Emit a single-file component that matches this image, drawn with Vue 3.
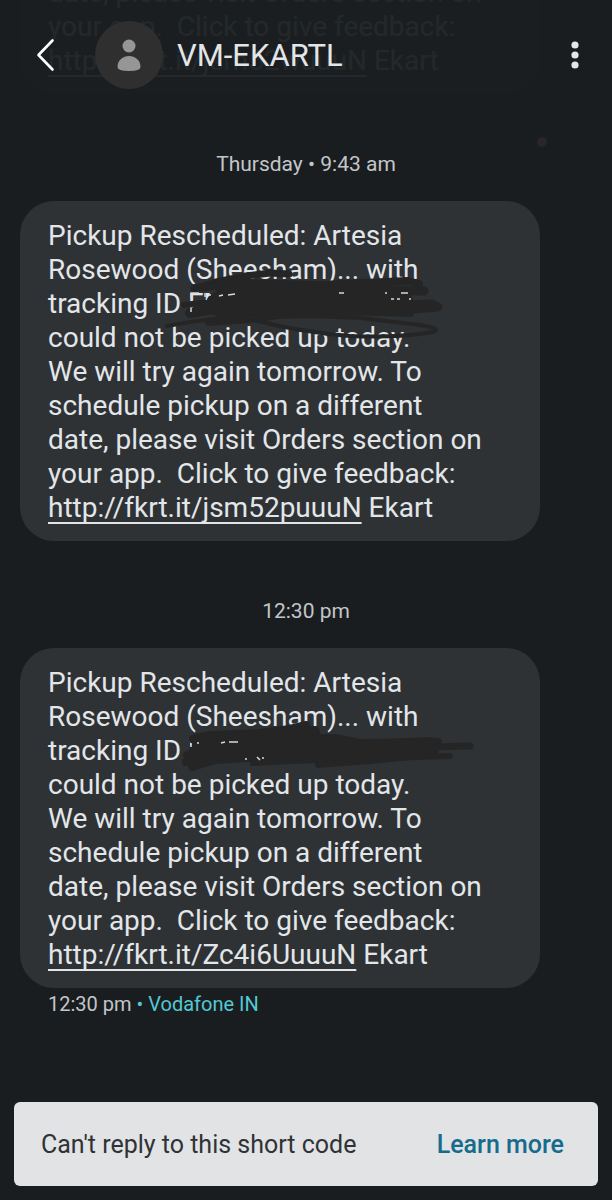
<script setup>
const intro = ['Pickup Rescheduled: Artesia', 'Rosewood (Sheesham)... with']
const rest = [
  'could not be picked up today.',
  'We will try again tomorrow. To',
  'schedule pickup on a different',
  'date, please visit Orders section on',
  'your app.  Click to give feedback:',
]
const messages = [
  {
    time: 'Thursday • 9:43 am',
    link: 'http://fkrt.it/jsm52puuuN',
    strokes: [
      { w: 7, d: 'M174 88 L196 81 L226 75 L250 72 L269 73' },
      { w: 8, d: 'M175 87 L222 82 L300 84 L388 80 L399 83' },
      { w: 9, d: 'M200 90 L260 87 L330 89 L404 90' },
      { w: 24, d: 'M198 103 L250 103 L310 102 L382 103' },
      { w: 6, d: 'M164 104 L180 102 L200 102' },
      { w: 9, d: 'M300 101 L380 104 L412 103 L418 106 L380 109' },
      { w: 10, d: 'M170 112 L200 107 L240 109' },
      { w: 8, d: 'M189 121 L230 118 L273 112 L330 110 L390 112' },
      { w: 4, d: 'M147 125 L170 121 L200 117 L290 115 L340 117 L400 124 Q424 128 412 131 Q380 137 330 135 Q280 131 238 120' },
    ],
    slivers: 'M171 97 V92 H179 M171 107 V111 M185 92 V96 M190 93 V95 M199 95 L203 94 M208 94 L215 93 M319 92 H324 M365 92 H367 M381 92 H388 M371 98 H374 M377 98 H380 M390 97 V99',
  },
  {
    time: '12:30 pm',
    link: 'http://fkrt.it/Zc4i6UuuuN',
    strokes: [
      { w: 8, d: 'M173 91 L190 87 L240 85 L270 81 L286 77' },
      { w: 12, d: 'M176 92 L240 89 L294 84' },
      { w: 18, d: 'M178 103 L220 101 L260 98 L308 96' },
      { w: 8, d: 'M167 107 L180 103 M166 114 L200 108 L260 105' },
      { w: 8, d: 'M172 119 L196 112 L260 108' },
      { w: 20, d: 'M265 104 L310 101 L370 101 L410 99' },
      { w: 8, d: 'M300 90 L315 90 L340 95 L418 94' },
      { w: 7, d: 'M370 101 L410 99 L450 98' },
      { w: 6, d: 'M233 115 L270 113 L360 110 L430 108' },
      { w: 6, d: 'M298 117 L350 113 L400 108' },
    ],
    slivers: 'M171 95 V99 M177 95 H179 M201 95 L205 94 M209 94 H218 M225 111 H227 M237 109 L240 112 M243 109 V111',
  },
]
</script>

<template>
  <main class="screen">
    <header class="bar">
      <button class="icon back" aria-label="Back">
        <svg width="20" height="34" viewBox="0 0 20 34"><path d="M16.500 2.500 L2.500 17 L16.500 31.500" fill="none" stroke="#fff" stroke-width="2.600" stroke-linecap="round" stroke-linejoin="round" /></svg>
      </button>
      <svg class="avatar" width="68" height="68" viewBox="0 0 68 68" aria-hidden="true">
        <circle cx="34" cy="34" r="34" fill="#2f2f2f" />
        <circle cx="34" cy="25" r="6.500" fill="#969696" />
        <path d="M22.500 46 C22.500 39 28 35 34 35 S45.500 39 45.500 46 Q45.500 50 34 50 T22.500 46Z" fill="#969696" />
      </svg>
      <h1>VM-EKARTL</h1>
      <button class="icon" aria-label="More options">
        <svg width="8" height="30" viewBox="0 0 8 30" fill="#e3e6ea"><circle cx="4" cy="5" r="3.600" /><circle cx="4" cy="15" r="3.600" /><circle cx="4" cy="25" r="3.600" /></svg>
      </button>
    </header>

    <section class="thread">
      <article class="bubble past">
        <p>date, please visit Orders section on<br />your app.&nbsp; Click to give feedback:<br /><a href="#">http://fkrt.it/jsm52wuuuN</a> Ekart</p>
      </article>
      <template v-for="m in messages" :key="m.link">
        <time class="stamp">{{ m.time }}</time>
        <article class="bubble">
          <p><template v-for="l in intro" :key="l">{{ l }}<br /></template>tracking ID FM<br /><template v-for="l in rest" :key="l">{{ l }}<br /></template><a href="#">{{ m.link }}</a> Ekart</p>
          <svg class="scribble" width="520" height="160" viewBox="0 0 520 160" fill="none" stroke-linecap="round" stroke-linejoin="round" aria-hidden="true">
            <path v-for="s in m.strokes" :key="s.d" :d="s.d" :stroke-width="s.w" stroke="#252525" />
            <path :d="m.slivers" stroke="#d5d8da" stroke-width="1.500" stroke-linecap="butt" />
          </svg>
        </article>
      </template>
      <p class="meta">12:30 pm <span>• Vodafone IN</span></p>
    </section>

    <footer class="notice">
      <span>Can't reply to this short code</span>
      <a href="#">Learn more</a>
    </footer>
    <i class="speck"></i>
  </main>
</template>

<style>
body { margin: 0; background: #191d20; }
</style>

<style scoped>
.screen {
  position: relative;
  min-height: 100vh;
  box-sizing: border-box;
  display: flex;
  flex-direction: column;
  padding-bottom: 14px;
  background: #191d20;
  color: #e3e6e9;
  font-family: Roboto, "Liberation Sans", sans-serif;
  overflow: hidden;
}
.bar {
  position: absolute;
  inset: 0 0 auto;
  height: 108px;
  box-sizing: border-box;
  display: flex;
  align-items: center;
  padding: 2px 33px 0 32px;
  background: rgba(25, 29, 32, 0.95);
  z-index: 1;
}
.icon { padding: 0; border: 0; background: none; display: flex; cursor: pointer; }
.icon svg { display: block; }
.back { padding: 0 4px; }
.avatar { margin-left: 35px; }
h1 { flex: 1; margin: 0 0 0 14px; font-size: 31px; font-weight: 400; }
.thread { flex: 1; display: flex; flex-direction: column; }
.bubble {
  position: relative;
  width: calc(100% - 92px);
  box-sizing: border-box;
  margin-left: 20px;
  padding: 18px 28px 16px;
  border-radius: 34px;
  background: #2e3235;
}
.bubble p { margin: 0; font-size: 28px; line-height: 34px; white-space: pre; }
.bubble a { color: inherit; text-decoration-thickness: 2px; text-underline-offset: 5px; text-decoration-skip-ink: none; }
.past { height: 94px; display: flex; align-items: flex-end; border-radius: 0 0 34px 34px; padding-top: 0; overflow: hidden; }
.scribble { position: absolute; left: 0; top: 0; }
.stamp { align-self: center; margin: 58px 0 24px; font-size: 21px; line-height: 25px; color: #c3c6c9; }
.meta { margin: 4px 0 0 48px; font-size: 20px; line-height: 24px; color: #c3c6c9; }
.meta span { color: #54c8d2; }
.notice {
  display: flex;
  justify-content: space-between;
  align-items: center;
  min-height: 84px;
  margin: 0 14px;
  padding: 0 34px 0 27px;
  box-sizing: border-box;
  border-radius: 6px;
  background: #e1e3e5;
  color: #303235;
  font-size: 25px;
}
.notice a { color: #176b8c; text-decoration: none; font-weight: 500; }
.speck { position: absolute; right: 65px; top: 137px; width: 10px; height: 10px; border-radius: 5px; background: #2a2528; }
</style>
